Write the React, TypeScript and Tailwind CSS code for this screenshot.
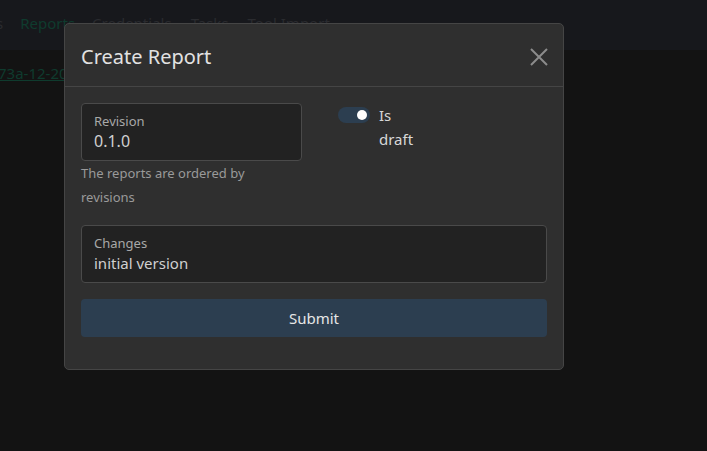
import { useState } from "react";

const NavLink = ({ label, active, className = "" }: { label: string; active?: boolean; className?: string }) => (
  <span className={`${active ? "text-[#0f3b2e]" : "text-[#2a2b2f]"} text-[15px] ${className}`}>{label}</span>
);

const App = () => {
  const [draft, setDraft] = useState(true);
  const [revision, setRevision] = useState("0.1.0");
  const [changes, setChanges] = useState("initial version");

  return (
    <div
      className="relative w-[707px] h-[451px] overflow-hidden bg-[#131313]"
      style={{ fontFamily: '"Noto Sans", "Open Sans", sans-serif' }}
    >
      {/* page behind the overlay */}
      <div className="h-[50px] bg-[#17181c] flex items-center gap-[17px] pb-[4px]">
        <NavLink label="s" className="-ml-[4px]" />
        <NavLink label="Reports" active />
        <NavLink label="Credentials" />
        <NavLink label="Tasks" className="ml-[2px]" />
        <NavLink label="Tool Import" className="ml-[2px]" />
      </div>
      <div className="-ml-[2px] mt-[12px] text-[15px] text-[#0f3b2e] underline">73a-12-20</div>

      {/* modal */}
      <div className="absolute left-[64px] top-[23px] w-[500px] rounded-[5px] border border-[#454545] bg-[#2f2f2f] text-[#dcdcdc]">
        <div className="flex items-center justify-between h-[63px] pl-[16px] pr-[14px] pt-[3px] border-b border-[#454545]">
          <h2 className="text-[20px] text-[#e2e2e2]">Create Report</h2>
          <button className="text-[#8c8c8c]">
            <svg width="20" height="20" viewBox="0 0 20 20" fill="none" stroke="currentColor" strokeWidth="2">
              <path d="M2 2L18 18M18 2L2 18" />
            </svg>
          </button>
        </div>
        <div className="px-[16px] pt-[16px] pb-[32px]">
          <div className="flex gap-[36px]">
            <div className="w-[221px]">
              <label className="block h-[58px] rounded-[4px] border border-[#4a4a4a] bg-[#222222] px-[12px] pt-[8px]">
                <span className="block text-[13px] leading-[18px] text-[#a8a8a8]">Revision</span>
                <input
                  value={revision}
                  onChange={(e) => setRevision(e.target.value)}
                  className="block w-full bg-transparent outline-none text-[16px] leading-[22px] text-[#d0d0d0]"
                />
              </label>
              <p className="max-w-[180px] text-[13px] leading-[24px] text-[#9a9a9a]">
                The reports are ordered by revisions
              </p>
            </div>
            <div className="flex gap-[9px]">
              <button
                onClick={() => setDraft(!draft)}
                className="mt-[4px] w-[32px] h-[16px] rounded-full bg-[#2c3e50] relative"
              >
                <span className={`absolute top-[3px] ${draft ? "left-[19px]" : "left-[3px]"} w-[10px] h-[10px] rounded-full bg-white`} />
              </button>
              <div className="w-[40px] text-[15px] leading-[24px] text-[#d8d8d8]">Is draft</div>
            </div>
          </div>
          <label className="mt-[16px] block h-[58px] rounded-[4px] border border-[#4a4a4a] bg-[#222222] px-[12px] pt-[8px]">
            <span className="block text-[13px] leading-[18px] text-[#a8a8a8]">Changes</span>
            <input
              value={changes}
              onChange={(e) => setChanges(e.target.value)}
              className="block w-full bg-transparent outline-none text-[15px] leading-[22px] text-[#d0d0d0]"
            />
          </label>
          <button className="mt-[16px] w-full h-[38px] rounded-[4px] bg-[#2c3e50] text-[15px] text-[#e6e6e6]">
            Submit
          </button>
        </div>
      </div>
    </div>
  );
};
export default App;
